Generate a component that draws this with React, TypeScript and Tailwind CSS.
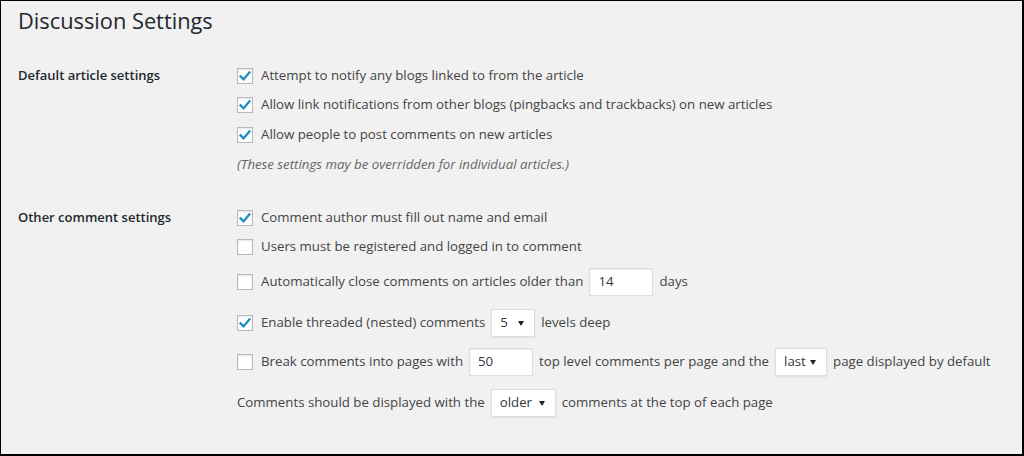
import React from 'react';

const FONT = '[font-family:"Open_Sans","Noto_Sans",sans-serif]';

const Check: React.FC<{ checked?: boolean }> = ({ checked }) => (
  <span className="w-4 h-4 shrink-0 bg-white border border-[#b4b9be] shadow-[inset_0_1px_2px_rgba(0,0,0,0.1)] flex items-center justify-center mr-2">
    {checked && (
      <svg width="14" height="14" viewBox="0 0 14 14">
        <path d="M2.6 7.4 L5.6 10.4 L11.4 3.4" fill="none" stroke="#1e8cbe" strokeWidth="2.3" strokeLinecap="square" />
      </svg>
    )}
  </span>
);

const TextBox: React.FC<{ value: string; w: string }> = ({ value, w }) => (
  <span className={`${w} h-[28px] shrink-0 bg-white border border-[#ddd] shadow-[inset_0_1px_2px_rgba(0,0,0,0.07)] flex items-center px-[8px] text-[#32373c] mx-[6px]`}>
    {value}
  </span>
);

const Select: React.FC<{ value: string; w: string }> = ({ value, w }) => (
  <span className={`${w} h-[28px] shrink-0 bg-white border border-[#ddd] shadow-[0_1px_2px_rgba(0,0,0,0.07)] flex items-center justify-between pl-[8px] pr-[10px] text-[#32373c] mx-[6px]`}>
    <span>{value}</span>
    <svg width="6" height="5" viewBox="0 0 6 5">
      <polygon points="0,0 6,0 3,5" fill="#222" />
    </svg>
  </span>
);

const Row: React.FC<{ h: string; children: React.ReactNode }> = ({ h, children }) => (
  <div className={`${h} flex items-center whitespace-nowrap`}>{children}</div>
);

export default function App() {
  return (
    <div className={`w-[1024px] h-[456px] bg-[#f1f1f1] border-t border-l border-r-2 border-b-2 border-black text-[13.25px] text-[#444] ${FONT}`}>
      <div className="pl-[17px]">
        <h1 className="text-[21.8px] text-[#23282d] h-[42px] pt-[4px] leading-[32px]">Discussion Settings</h1>

        <div className="mt-[18px] flex">
          <div className="w-[219px] h-[29px] flex items-center font-semibold text-[13px] text-[#23282d]">Default article settings</div>
          <div className="flex flex-col">
            <Row h="h-[29px]"><Check checked />Attempt to notify any blogs linked to from the article</Row>
            <Row h="h-[30px]"><Check checked />Allow link notifications from other blogs (pingbacks and trackbacks) on new articles</Row>
            <Row h="h-[30px]"><Check checked />Allow people to post comments on new articles</Row>
            <Row h="h-[29px]"><span className="italic text-[#666]">(These settings may be overridden for individual articles.)</span></Row>
          </div>
        </div>

        <div className="mt-[24px] flex">
          <div className="w-[219px] h-[29px] flex items-center font-semibold text-[13px] text-[#23282d]">Other comment settings</div>
          <div className="flex flex-col">
            <Row h="h-[29px]"><Check checked />Comment author must fill out name and email</Row>
            <Row h="h-[29px]"><Check />Users must be registered and logged in to comment</Row>
            <Row h="h-[42px]"><Check />Automatically close comments on articles older than<TextBox value="14" w="w-[64px]" />days</Row>
            <Row h="h-[40px]"><Check checked />Enable threaded (nested) comments<Select value="5" w="w-[44px]" />levels deep</Row>
            <Row h="h-[38px]"><Check />Break comments into pages with<TextBox value="50" w="w-[64px]" />top level comments per page and the<Select value="last" w="w-[52px]" />page displayed by default</Row>
            <Row h="h-[44px]">Comments should be displayed with the<Select value="older" w="w-[65px]" />comments at the top of each page</Row>
          </div>
        </div>
      </div>
    </div>
  );
}
